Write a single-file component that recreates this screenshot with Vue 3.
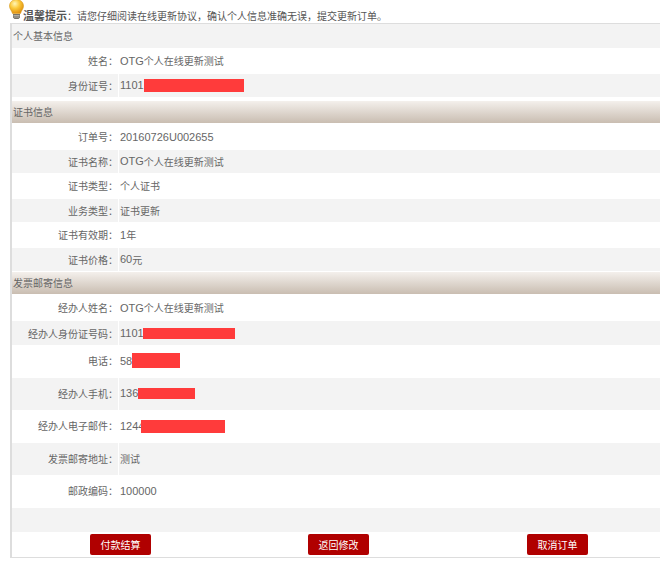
<template>
  <div class="page">
    <p class="tip">
      <svg class="bulb" width="15" height="21" viewBox="0 0 15 21">
        <defs>
          <radialGradient id="glass" cx="0.38" cy="0.3" r="0.75">
            <stop offset="0" stop-color="#fff6b8" />
            <stop offset="0.45" stop-color="#fbc93a" />
            <stop offset="1" stop-color="#dd8a0c" />
          </radialGradient>
        </defs>
        <path d="M7.5 0.5C3.4 0.5 0.5 3.4 0.5 7c0 3 2.2 4.4 3 7.5h8c0.8-3.1 3-4.5 3-7.5 0-3.6-2.9-6.500-7-6.500z" fill="url(#glass)" stroke="#d99a1e" stroke-width="0.6" />
        <path d="M4 15h7v3.500l-1.500 1.500h-4l-1.500-1.500z" fill="#77736a" />
        <path d="M4.500 16.500h6M4.500 18h6" stroke="#c9c6bf" stroke-width="0.7" />
      </svg>
      <b>温馨提示</b>：请您仔细阅读在线更新协议，确认个人信息准确无误，提交更新订单。
    </p>
    <div class="panel">
      <div class="plain-title">个人基本信息</div>
      <div v-for="row in personal" :key="row.label" class="row" :class="{ grey: row.grey }" :style="rowStyle(row)">
        <div class="label">{{ row.label }}：</div>
        <div class="value">
          <span v-if="row.lat" class="lat">{{ row.lat }}</span>{{ row.text }}
          <i v-if="row.mask" class="mask" :style="maskStyle(row.mask)"></i>
        </div>
      </div>

      <div class="section first">证书信息</div>
      <div v-for="row in cert" :key="row.label" class="row" :class="{ grey: row.grey }" :style="rowStyle(row)">
        <div class="label">{{ row.label }}：</div>
        <div class="value">
          <span v-if="row.lat" class="lat">{{ row.lat }}</span>{{ row.text }}
        </div>
      </div>

      <div class="section">发票邮寄信息</div>
      <div v-for="row in invoice" :key="row.label" class="row" :class="{ grey: row.grey }" :style="rowStyle(row)">
        <div class="label">{{ row.label }}：</div>
        <div class="value">
          <span v-if="row.lat" class="lat">{{ row.lat }}</span>{{ row.text }}
          <i v-if="row.mask" class="mask" :style="maskStyle(row.mask)"></i>
        </div>
      </div>
      <div class="blank"></div>

      <div class="actions">
        <button type="button" class="btn">付款结算</button>
        <button type="button" class="btn">返回修改</button>
        <button type="button" class="btn">取消订单</button>
      </div>
    </div>
  </div>
</template>

<script setup>
// mask: width, height, left shift, top shift
const personal = [
  { label: '姓名', lat: 'OTG', text: '个人在线更新测试', h: 26, pb: 1 },
  { label: '身份证号', lat: '1101', mask: [100, 13, 0, 1], h: 23, pb: 1, grey: true }
]

const cert = [
  { label: '订单号', lat: '20160726U002655', h: 27, pb: 0 },
  { label: '证书名称', lat: 'OTG', text: '个人在线更新测试', h: 23, pb: 1, grey: true },
  { label: '证书类型', text: '个人证书', h: 26, pb: 1 },
  { label: '业务类型', text: '证书更新', h: 23, pb: 1, grey: true },
  { label: '证书有效期', lat: '1', text: '年', h: 26, pb: 1 },
  { label: '证书价格', lat: '60', text: '元', h: 23, pb: 1, grey: true }
]

const invoice = [
  { label: '经办人姓名', lat: 'OTG', text: '个人在线更新测试', h: 27, pb: 0 },
  { label: '经办人身份证号码', lat: '1101', mask: [92, 11, -1, 0], h: 24, pb: 0, grey: true },
  { label: '电话', lat: '58', mask: [48, 15, 0, 0], h: 33, pb: 2 },
  { label: '经办人手机', lat: '136', mask: [57, 11, 0, 0], h: 32, pb: 2, grey: true },
  { label: '经办人电子邮件', lat: '1244', mask: [84, 13, -3, 2], h: 33, pb: 2 },
  { label: '发票邮寄地址', text: '测试', h: 32, pb: 2, grey: true },
  { label: '邮政编码', lat: '100000', h: 33, pb: 2 }
]

function rowStyle(row) {
  return { height: row.h + 'px', '--pb': row.pb + 'px' }
}

function maskStyle([width, height, left, top]) {
  return { width: width + 'px', height: height + 'px', marginLeft: left + 'px', marginTop: top + 'px' }
}
</script>

<style>
html,
body {
  margin: 0;
  background: #fff;
  overflow: hidden;
}
</style>

<style scoped>
.page {
  width: 660px;
  height: 569px;
  font-family: "Noto Sans CJK SC", "Liberation Sans", sans-serif;
  font-size: 10px;
  color: #666;
}

.tip {
  display: flex;
  align-items: flex-end;
  height: 23px;
  margin: 0;
  padding-left: 9px;
  padding-bottom: 1px;
  box-sizing: border-box;
  line-height: 13px;
  color: #555;
}

.tip b {
  font-size: 11px;
  font-weight: 700;
}

.bulb {
  flex: none;
  margin-right: -1px;
  margin-bottom: 2px;
}

.panel {
  width: 650px;
  height: 535px;
  margin-left: 10px;
  box-sizing: border-box;
  border-top: 1px solid #ddd;
  border-left: 2px solid #ddd;
  border-bottom: 1px solid #ddd;
}

.plain-title {
  height: 24px;
  padding-left: 1px;
  line-height: 24px;
  background: #f3f3f3;
}

.section {
  height: 22px;
  margin-top: 1px;
  padding-left: 1px;
  line-height: 22px;
  background: linear-gradient(#f4f0ec, #c9bdb1);
}

.section.first {
  margin-top: 4px;
}

.row {
  display: flex;
}

.label,
.value {
  display: flex;
  align-items: center;
  box-sizing: border-box;
  padding-bottom: var(--pb);
}

.label {
  flex: none;
  width: 106px;
  margin-right: 1px;
  justify-content: flex-end;
}

.value {
  flex: 1;
  padding-left: 1px;
}

.grey .label,
.grey .value {
  background: #f3f3f3;
}

.lat {
  font-family: "Liberation Sans", sans-serif;
  font-size: 11px;
}

.mask {
  display: block;
  background: #ff3b3b;
}

.blank {
  height: 24px;
  background: #f3f3f3;
}

.actions {
  display: flex;
  gap: 157px;
  padding: 2px 0 0 78px;
}

.btn {
  width: 61px;
  height: 21px;
  padding: 0;
  border: none;
  border-radius: 2px;
  background: #b00000;
  color: #fff;
  font: inherit;
}

.btn:last-child {
  margin-left: 1px;
}
</style>
